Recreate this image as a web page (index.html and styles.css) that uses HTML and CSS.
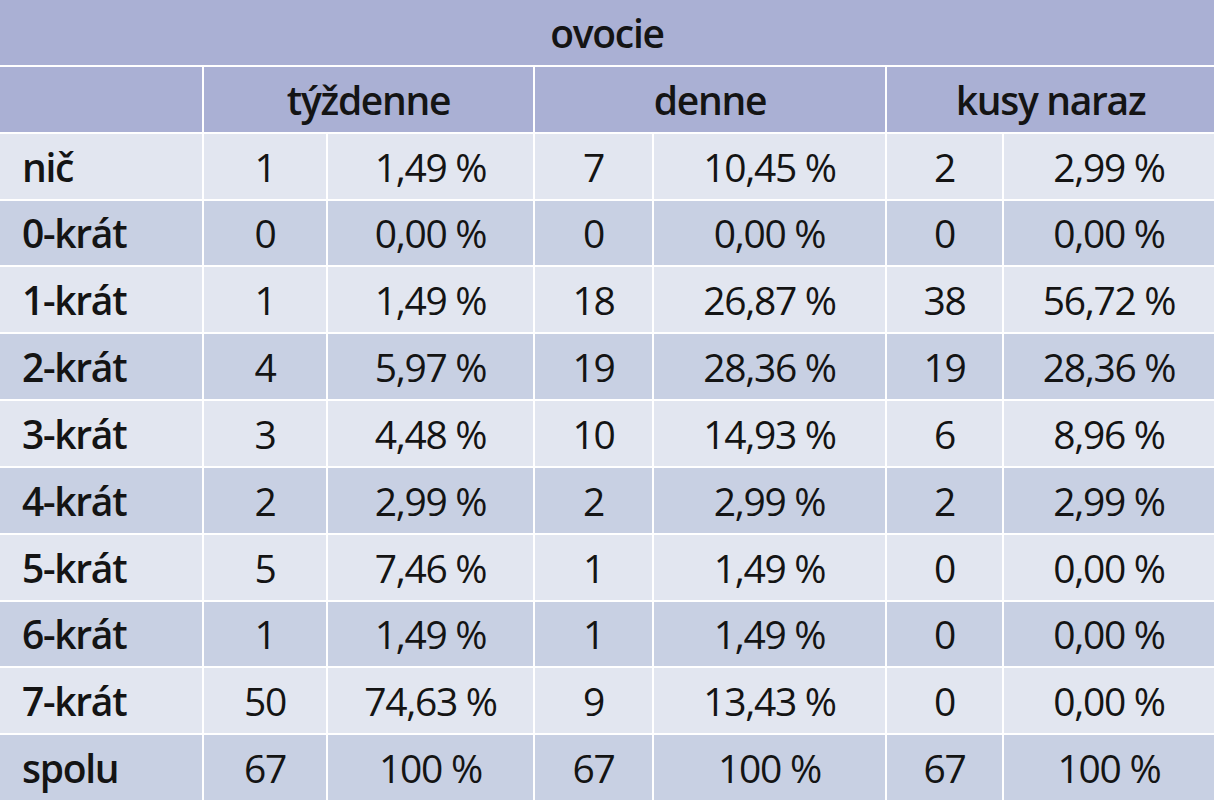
FILE: index.html
```html
<!DOCTYPE html>
<html lang="sk">
<head>
<meta charset="utf-8">
<link rel="stylesheet" href="styles.css">
</head>
<body>
<div class="table">
  <div class="cell head title">ovocie</div>

  <div class="cell head blank"></div>
  <div class="cell head group">týždenne</div>
  <div class="cell head group">denne</div>
  <div class="cell head group">kusy naraz</div>

  <div class="cell lbl l">nič</div><div class="cell l">1</div><div class="cell l">1,49 %</div><div class="cell l">7</div><div class="cell l">10,45 %</div><div class="cell l">2</div><div class="cell l">2,99 %</div>
  <div class="cell lbl d">0-krát</div><div class="cell d">0</div><div class="cell d">0,00 %</div><div class="cell d">0</div><div class="cell d">0,00 %</div><div class="cell d">0</div><div class="cell d">0,00 %</div>
  <div class="cell lbl l">1-krát</div><div class="cell l">1</div><div class="cell l">1,49 %</div><div class="cell l">18</div><div class="cell l">26,87 %</div><div class="cell l">38</div><div class="cell l">56,72 %</div>
  <div class="cell lbl d">2-krát</div><div class="cell d">4</div><div class="cell d">5,97 %</div><div class="cell d">19</div><div class="cell d">28,36 %</div><div class="cell d">19</div><div class="cell d">28,36 %</div>
  <div class="cell lbl l">3-krát</div><div class="cell l">3</div><div class="cell l">4,48 %</div><div class="cell l">10</div><div class="cell l">14,93 %</div><div class="cell l">6</div><div class="cell l">8,96 %</div>
  <div class="cell lbl d">4-krát</div><div class="cell d">2</div><div class="cell d">2,99 %</div><div class="cell d">2</div><div class="cell d">2,99 %</div><div class="cell d">2</div><div class="cell d">2,99 %</div>
  <div class="cell lbl l">5-krát</div><div class="cell l">5</div><div class="cell l">7,46 %</div><div class="cell l">1</div><div class="cell l">1,49 %</div><div class="cell l">0</div><div class="cell l">0,00 %</div>
  <div class="cell lbl d">6-krát</div><div class="cell d">1</div><div class="cell d">1,49 %</div><div class="cell d">1</div><div class="cell d">1,49 %</div><div class="cell d">0</div><div class="cell d">0,00 %</div>
  <div class="cell lbl l">7-krát</div><div class="cell l">50</div><div class="cell l">74,63 %</div><div class="cell l">9</div><div class="cell l">13,43 %</div><div class="cell l">0</div><div class="cell l">0,00 %</div>
  <div class="cell lbl d">spolu</div><div class="cell d">67</div><div class="cell d">100 %</div><div class="cell d">67</div><div class="cell d">100 %</div><div class="cell d">67</div><div class="cell d">100 %</div>
</div>
</body>
</html>
```
FILE: styles.css
```css
html, body {
  margin: 0;
  padding: 0;
  background: #ffffff;
  overflow: hidden;
}

.table {
  width: 1214px;
  height: 800px;
  display: grid;
  grid-template-columns: 202px 122px 205px 117px 231px 115px 210px;
  grid-template-rows: repeat(12, 1fr);
  gap: 2px;
  background: #ffffff;
  font-family: "Open Sans", "Noto Sans", sans-serif;
  font-size: 39px;
  color: #141414;
  letter-spacing: -1.3px;
}

.cell {
  display: flex;
  align-items: center;
  justify-content: center;
  white-space: nowrap;
}

.head {
  background: #aab0d4;
  font-weight: 600;
}

.title {
  grid-column: 1 / -1;
}

.group {
  grid-column: span 2;
}

.l {
  background: #e2e6f0;
}

.d {
  background: #c8d0e3;
}

.lbl {
  justify-content: flex-start;
  padding-left: 22px;
  font-weight: 600;
}
```
